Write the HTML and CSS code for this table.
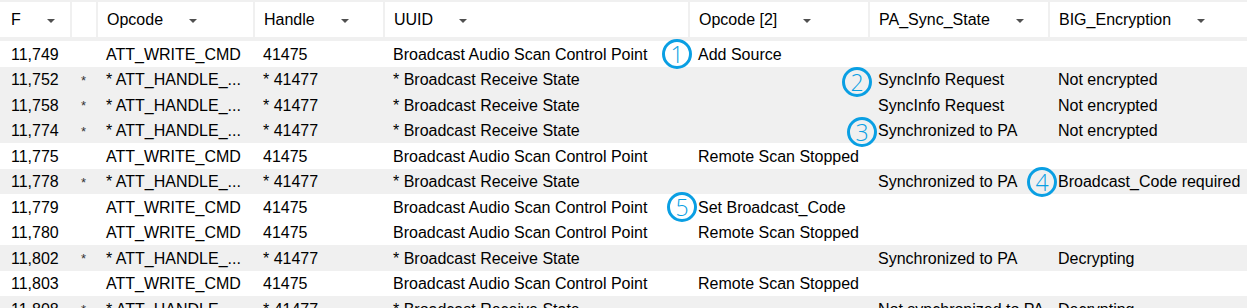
FILE: index.html
```html
<!DOCTYPE html>
<html>
<head>
<meta charset="utf-8">
<link rel="stylesheet" href="styles.css">
</head>
<body>
<div class="list">
  <div class="header">
    <div class="hcell first"><span>F</span><span class="arrow"></span></div>
    <div class="hcell"></div>
    <div class="hcell"><span>Opcode</span><span class="arrow"></span></div>
    <div class="hcell"><span>Handle</span><span class="arrow"></span></div>
    <div class="hcell"><span>UUID</span><span class="arrow"></span></div>
    <div class="hcell"><span>Opcode [2]</span><span class="arrow"></span></div>
    <div class="hcell"><span>PA_Sync_State</span><span class="arrow"></span></div>
    <div class="hcell"><span>BIG_Encryption</span><span class="arrow"></span></div>
  </div>

  <div class="row">
    <div class="cell first">11,749</div><div class="cell star"></div><div class="cell">ATT_WRITE_CMD</div><div class="cell">41475</div><div class="cell">Broadcast Audio Scan Control Point</div><div class="cell">Add Source</div><div class="cell"></div><div class="cell"></div>
  </div>
  <div class="row alt">
    <div class="cell first">11,752</div><div class="cell star">*</div><div class="cell">* ATT_HANDLE_...</div><div class="cell">* 41477</div><div class="cell">* Broadcast Receive State</div><div class="cell"></div><div class="cell">SyncInfo Request</div><div class="cell">Not encrypted</div>
  </div>
  <div class="row alt">
    <div class="cell first">11,758</div><div class="cell star">*</div><div class="cell">* ATT_HANDLE_...</div><div class="cell">* 41477</div><div class="cell">* Broadcast Receive State</div><div class="cell"></div><div class="cell">SyncInfo Request</div><div class="cell">Not encrypted</div>
  </div>
  <div class="row alt">
    <div class="cell first">11,774</div><div class="cell star">*</div><div class="cell">* ATT_HANDLE_...</div><div class="cell">* 41477</div><div class="cell">* Broadcast Receive State</div><div class="cell"></div><div class="cell">Synchronized to PA</div><div class="cell">Not encrypted</div>
  </div>
  <div class="row">
    <div class="cell first">11,775</div><div class="cell star"></div><div class="cell">ATT_WRITE_CMD</div><div class="cell">41475</div><div class="cell">Broadcast Audio Scan Control Point</div><div class="cell">Remote Scan Stopped</div><div class="cell"></div><div class="cell"></div>
  </div>
  <div class="row alt">
    <div class="cell first">11,778</div><div class="cell star">*</div><div class="cell">* ATT_HANDLE_...</div><div class="cell">* 41477</div><div class="cell">* Broadcast Receive State</div><div class="cell"></div><div class="cell">Synchronized to PA</div><div class="cell">Broadcast_Code required</div>
  </div>
  <div class="row">
    <div class="cell first">11,779</div><div class="cell star"></div><div class="cell">ATT_WRITE_CMD</div><div class="cell">41475</div><div class="cell">Broadcast Audio Scan Control Point</div><div class="cell">Set Broadcast_Code</div><div class="cell"></div><div class="cell"></div>
  </div>
  <div class="row">
    <div class="cell first">11,780</div><div class="cell star"></div><div class="cell">ATT_WRITE_CMD</div><div class="cell">41475</div><div class="cell">Broadcast Audio Scan Control Point</div><div class="cell">Remote Scan Stopped</div><div class="cell"></div><div class="cell"></div>
  </div>
  <div class="row alt">
    <div class="cell first">11,802</div><div class="cell star">*</div><div class="cell">* ATT_HANDLE_...</div><div class="cell">* 41477</div><div class="cell">* Broadcast Receive State</div><div class="cell"></div><div class="cell">Synchronized to PA</div><div class="cell">Decrypting</div>
  </div>
  <div class="row">
    <div class="cell first">11,803</div><div class="cell star"></div><div class="cell">ATT_WRITE_CMD</div><div class="cell">41475</div><div class="cell">Broadcast Audio Scan Control Point</div><div class="cell">Remote Scan Stopped</div><div class="cell"></div><div class="cell"></div>
  </div>
  <div class="row alt">
    <div class="cell first">11,808</div><div class="cell star">*</div><div class="cell">* ATT_HANDLE_...</div><div class="cell">* 41477</div><div class="cell">* Broadcast Receive State</div><div class="cell"></div><div class="cell">Not synchronized to PA</div><div class="cell">Decrypting</div>
  </div>

  <span class="badge b1">1</span>
  <span class="badge b2">2</span>
  <span class="badge b3">3</span>
  <span class="badge b4">4</span>
  <span class="badge b5">5</span>
</div>
</body>
</html>
```

FILE: styles.css
```css
html, body {
  margin: 0;
  padding: 0;
  background: #ffffff;
  overflow: hidden;
}

body {
  font-family: "Liberation Sans", Arial, sans-serif;
  font-size: 16px;
  color: #000000;
}

.list {
  position: relative;
  width: 1247px;
  border-top: 2px solid #f0f0f0;
}

.header,
.row {
  display: grid;
  grid-template-columns: 70px 26px 157px 130px 305px 180px 180px 199px;
}

.header {
  height: 35px;
  border-bottom: 4px solid #f0f0f0;
}

.hcell {
  display: flex;
  align-items: center;
  gap: 26px;
  padding-left: 9px;
  padding-top: 1px;
  border-left: 2px solid #f0f0f0;
  white-space: nowrap;
  overflow: hidden;
}

.hcell.first {
  border-left: none;
  padding-left: 11px;
}

.arrow {
  width: 0;
  height: 0;
  border-left: 4px solid transparent;
  border-right: 4px solid transparent;
  border-top: 4px solid #505050;
  margin-top: 1px;
}

.row {
  height: 25.5px;
  background: #ffffff;
}

.row.alt {
  background: #f0f0f0;
}

.cell {
  display: flex;
  align-items: center;
  padding-left: 10px;
  padding-top: 2px;
  white-space: nowrap;
  overflow: hidden;
}

.cell.first {
  padding-left: 11px;
}

.cell.star {
  padding-left: 11px;
  font-size: 13px;
  color: #333333;
}

.badge {
  position: absolute;
  width: 30px;
  height: 30px;
  box-sizing: border-box;
  border: 3px solid #0a9fe3;
  border-radius: 50%;
  display: flex;
  align-items: center;
  justify-content: center;
  padding-top: 1px;
  color: #0a9fe3;
  font-family: "Open Sans", "Liberation Sans", sans-serif;
  font-weight: 300;
  font-size: 23px;
  line-height: 1;
  background: transparent;
}

.b1 { left: 662px; top: 36.5px; }
.b2 { left: 842px; top: 64.5px; }
.b3 { left: 847px; top: 114.5px; }
.b4 { left: 1027px; top: 165px; }
.b5 { left: 667px; top: 190px; }
```
